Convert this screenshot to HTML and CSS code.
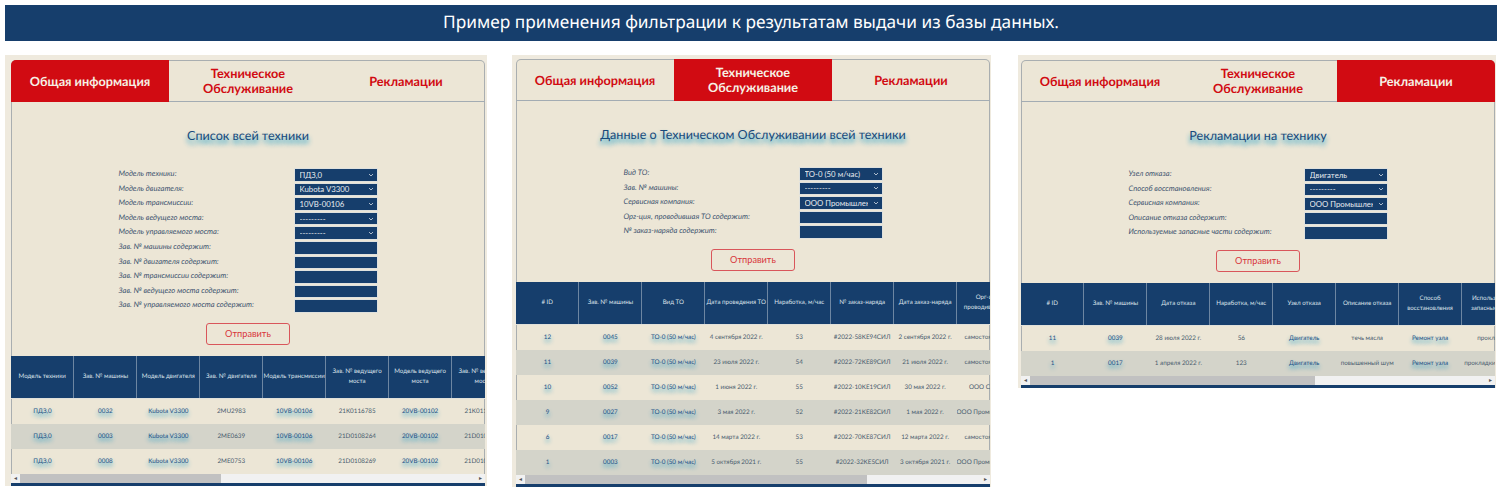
FILE: index.html
```html
<!DOCTYPE html>
<html lang="ru">
<head>
    <meta charset="UTF-8">
    <title>Пример применения фильтрации</title>
    <link rel="stylesheet" href="styles.css">
</head>
<body>
    <h1 class="banner">Пример применения фильтрации к результатам выдачи из базы данных.</h1>

    <div class="shots">
        <!-- Общая информация -->
        <section class="shot shot-first">
            <div class="card">
                <nav class="tabs">
                    <a class="tab active">Общая информация</a>
                    <a class="tab">Техническое Обслуживание</a>
                    <a class="tab">Рекламации</a>
                </nav>
                <h2 class="title">Список всей техники</h2>
                <form class="filter">
                    <label>Модель техники:</label>
                    <select><option>ПДЗ,0</option></select>
                    <label>Модель двигателя:</label>
                    <select><option>Kubota V3300</option></select>
                    <label>Модель трансмиссии:</label>
                    <select><option>10VB-00106</option></select>
                    <label>Модель ведущего моста:</label>
                    <select><option>---------</option></select>
                    <label>Модель управляемого моста:</label>
                    <select><option>---------</option></select>
                    <label>Зав. № машины содержит:</label>
                    <input type="text">
                    <label>Зав. № двигателя содержит:</label>
                    <input type="text">
                    <label>Зав. № трансмиссии содержит:</label>
                    <input type="text">
                    <label>Зав. № ведущего моста содержит:</label>
                    <input type="text">
                    <label>Зав. № управляемого моста содержит:</label>
                    <input type="text">
                    <button type="button" class="send">Отправить</button>
                </form>
                <div class="table-wrap">
                    <table>
                        <thead>
                            <tr>
                                <th>Модель техники</th>
                                <th>Зав. № машины</th>
                                <th>Модель двигателя</th>
                                <th>Зав. № двигателя</th>
                                <th>Модель трансмиссии</th>
                                <th>Зав. № ведущего моста</th>
                                <th>Модель ведущего моста</th>
                                <th>Зав. № ведущего моста</th>
                            </tr>
                        </thead>
                        <tbody>
                            <tr>
                                <td class="link">ПДЗ,0</td><td class="link">0032</td><td class="link">Kubota V3300</td><td>2MU2983</td>
                                <td class="link">10VB-00106</td><td>21K0116785</td><td class="link">20VB-00102</td><td>21K0116785</td>
                            </tr>
                            <tr>
                                <td class="link">ПДЗ,0</td><td class="link">0003</td><td class="link">Kubota V3300</td><td>2ME0639</td>
                                <td class="link">10VB-00106</td><td>21D0108264</td><td class="link">20VB-00102</td><td>21D0108264</td>
                            </tr>
                            <tr>
                                <td class="link">ПДЗ,0</td><td class="link">0008</td><td class="link">Kubota V3300</td><td>2ME0753</td>
                                <td class="link">10VB-00106</td><td>21D0108269</td><td class="link">20VB-00102</td><td>21D0108269</td>
                            </tr>
                        </tbody>
                    </table>
                </div>
                <div class="scrollbar"><span class="arrow">◂</span><div class="track"><div class="thumb thumb-first"></div></div><span class="arrow">▸</span></div>
                <div class="card-foot"></div>
            </div>
        </section>

        <!-- Техническое обслуживание -->
        <section class="shot shot-second">
            <div class="card">
                <nav class="tabs">
                    <a class="tab">Общая информация</a>
                    <a class="tab active">Техническое Обслуживание</a>
                    <a class="tab">Рекламации</a>
                </nav>
                <h2 class="title">Данные о Техническом Обслуживании всей техники</h2>
                <form class="filter">
                    <label>Вид ТО:</label>
                    <select><option>ТО-0 (50 м/час)</option></select>
                    <label>Зав. № машины:</label>
                    <select><option>---------</option></select>
                    <label>Сервисная компания:</label>
                    <select><option>ООО Промышленная техника</option></select>
                    <label>Орг-ция, проводившая ТО содержит:</label>
                    <input type="text">
                    <label>№ заказ-наряда содержит:</label>
                    <input type="text">
                    <button type="button" class="send">Отправить</button>
                </form>
                <div class="table-wrap">
                    <table>
                        <thead>
                            <tr>
                                <th># ID</th>
                                <th>Зав. № машины</th>
                                <th>Вид ТО</th>
                                <th>Дата проведения ТО</th>
                                <th>Наработка, м/час</th>
                                <th>№ заказ-наряда</th>
                                <th>Дата заказ-наряда</th>
                                <th>Орг-ция, проводившая ТО</th>
                            </tr>
                        </thead>
                        <tbody>
                            <tr>
                                <td class="link">12</td><td class="link">0045</td><td class="link">ТО-0 (50 м/час)</td><td>4 сентября 2022 г.</td>
                                <td>53</td><td>#2022-58KE94СИЛ</td><td>2 сентября 2022 г.</td><td>самостоятельно</td>
                            </tr>
                            <tr>
                                <td class="link">11</td><td class="link">0039</td><td class="link">ТО-0 (50 м/час)</td><td>23 июля 2022 г.</td>
                                <td>54</td><td>#2022-72KE89СИЛ</td><td>21 июля 2022 г.</td><td>самостоятельно</td>
                            </tr>
                            <tr>
                                <td class="link">10</td><td class="link">0052</td><td class="link">ТО-0 (50 м/час)</td><td>1 июня 2022 г.</td>
                                <td>55</td><td>#2022-10KE19СИЛ</td><td>30 мая 2022 г.</td><td>ООО Силант</td>
                            </tr>
                            <tr>
                                <td class="link">9</td><td class="link">0027</td><td class="link">ТО-0 (50 м/час)</td><td>3 мая 2022 г.</td>
                                <td>52</td><td>#2022-21KE82СИЛ</td><td>1 мая 2022 г.</td><td>ООО Промышленная</td>
                            </tr>
                            <tr>
                                <td class="link">6</td><td class="link">0017</td><td class="link">ТО-0 (50 м/час)</td><td>14 марта 2022 г.</td>
                                <td>53</td><td>#2022-70KE87СИЛ</td><td>12 марта 2022 г.</td><td>самостоятельно</td>
                            </tr>
                            <tr>
                                <td class="link">1</td><td class="link">0003</td><td class="link">ТО-0 (50 м/час)</td><td>5 октября 2021 г.</td>
                                <td>55</td><td>#2022-32KE5СИЛ</td><td>3 октября 2021 г.</td><td>ООО Промышленная</td>
                            </tr>
                        </tbody>
                    </table>
                </div>
                <div class="scrollbar"><span class="arrow">◂</span><div class="track"><div class="thumb thumb-second"></div></div><span class="arrow">▸</span></div>
                <div class="card-foot"></div>
            </div>
        </section>

        <!-- Рекламации -->
        <section class="shot shot-third">
            <div class="card">
                <nav class="tabs">
                    <a class="tab">Общая информация</a>
                    <a class="tab">Техническое Обслуживание</a>
                    <a class="tab active">Рекламации</a>
                </nav>
                <h2 class="title">Рекламации на технику</h2>
                <form class="filter">
                    <label>Узел отказа:</label>
                    <select><option>Двигатель</option></select>
                    <label>Способ восстановления:</label>
                    <select><option>---------</option></select>
                    <label>Сервисная компания:</label>
                    <select><option>ООО Промышленная техника</option></select>
                    <label>Описание отказа содержит:</label>
                    <input type="text">
                    <label>Используемые запасные части содержит:</label>
                    <input type="text">
                    <button type="button" class="send">Отправить</button>
                </form>
                <div class="table-wrap">
                    <table>
                        <thead>
                            <tr>
                                <th># ID</th>
                                <th>Зав. № машины</th>
                                <th>Дата отказа</th>
                                <th>Наработка, м/час</th>
                                <th>Узел отказа</th>
                                <th>Описание отказа</th>
                                <th>Способ восстановления</th>
                                <th>Используемые запасные части</th>
                            </tr>
                        </thead>
                        <tbody>
                            <tr>
                                <td class="link">11</td><td class="link">0039</td><td>28 июля 2022 г.</td><td>56</td>
                                <td class="link">Двигатель</td><td>течь масла</td><td class="link">Ремонт узла</td><td>прокладки</td>
                            </tr>
                            <tr>
                                <td class="link">1</td><td class="link">0017</td><td>1 апреля 2022 г.</td><td>123</td>
                                <td class="link">Двигатель</td><td>повышенный шум</td><td class="link">Ремонт узла</td><td>прокладки, сальник</td>
                            </tr>
                        </tbody>
                    </table>
                </div>
                <div class="scrollbar"><span class="arrow">◂</span><div class="track"><div class="thumb thumb-third"></div></div><span class="arrow">▸</span></div>
                <div class="card-foot"></div>
            </div>
        </section>
    </div>
</body>
</html>
```

FILE: styles.css
```css
html, body {
    margin: 0;
    padding: 0;
    background: #fff;
    overflow: hidden;
}

body {
    font-family: Lato, "Noto Sans", sans-serif;
    padding: 5px 6px 0 5px;
    height: 488px;
    text-rendering: geometricPrecision;
}

.banner {
    margin: 0;
    height: 36px;
    line-height: 36px;
    background: #163e6c;
    color: #fff;
    font-family: "Noto Sans", sans-serif;
    font-size: 17.3px;
    font-weight: 400;
    text-align: center;
}

.shots {
    display: flex;
    align-items: flex-start;
    margin-top: 14px;
}

.shot {
    background: #efeade;
    box-sizing: border-box;
}

.shot-first {
    width: 482px;
    padding: 5px 2px 0 6px;
}

.shot-second {
    width: 479px;
    margin-left: 25px;
    padding: 4px 1px 0 4px;
}

.shot-third {
    width: 478px;
    margin-left: 27px;
    padding: 5px 1px 0 3px;
}

.card {
    width: 474px;
    background: #ece6d6;
    border-radius: 5px 5px 0 0;
    box-shadow: inset 0 0 0 1px #a9aeb0;
    overflow: hidden;
}

/* tabs */
.tabs {
    display: grid;
    grid-template-columns: repeat(3, 1fr);
    height: 42px;
    border-bottom: 1px solid #a3acb3;
    box-sizing: border-box;
}

.tab {
    display: flex;
    align-items: center;
    justify-content: center;
    padding: 0 30px;
    color: #d10b12;
    font-size: 12.7px;
    font-weight: 700;
    line-height: 15px;
    text-align: center;
}

.tab:first-child,
.tab.active {
    padding: 0 10px;
}

.tab.active {
    background: #d10b12;
    color: #f6f1e4;
    height: 42px;
}

.title {
    margin: 0;
    height: 66px;
    box-sizing: border-box;
    padding-top: 25px;
    color: #174a7c;
    font-size: 12.6px;
    font-weight: 400;
    line-height: 18px;
    text-align: center;
    text-shadow: 0 4px 5px rgba(0, 150, 200, 0.9);
}

/* filter form */
.filter {
    display: grid;
    grid-template-columns: 175px 84px;
    grid-auto-rows: 13.6px;
    row-gap: 1px;
    justify-content: center;
    align-items: stretch;
}

.filter label {
    color: #3f5570;
    font-size: 7.6px;
    font-style: italic;
    line-height: 11px;
}

.filter select,
.filter input {
    box-sizing: border-box;
    width: 84px;
    height: 13.6px;
    margin: 0;
    padding: 0 14px 0 5px;
    border: 1px solid #dfe1de;
    border-radius: 0;
    outline: none;
    background-color: #163e6c;
    color: #e8ecf0;
    font-family: Lato, "Noto Sans", sans-serif;
    font-size: 7.8px;
}

.filter select {
    appearance: none;
    background-image: url("data:image/svg+xml,%3Csvg xmlns='http://www.w3.org/2000/svg' width='6' height='4' viewBox='0 0 6 4'%3E%3Cpath d='M1 1l2 2 2-2' fill='none' stroke='%23d5dde5' stroke-width='.8'/%3E%3C/svg%3E");
    background-repeat: no-repeat;
    background-position: right 3px center;
}

.send {
    grid-column: 1 / -1;
    justify-self: center;
    box-sizing: border-box;
    width: 84px;
    height: 22px;
    margin-top: 9px;
    grid-row-end: span 2;
    background: #ece6d6;
    border: 1px solid #d9565b;
    border-radius: 3px;
    color: #d8353b;
    font-family: Lato, "Noto Sans", sans-serif;
    font-size: 9.2px;
}

/* table */
.table-wrap {
    margin-top: 14px;
    overflow: hidden;
}

table {
    width: 504px;
    table-layout: fixed;
    border-collapse: collapse;
    text-align: center;
}

th {
    height: 42px;
    padding: 0;
    box-sizing: border-box;
    background: #163e6c;
    border-right: 1px solid #6d86a2;
    border-bottom: 1px solid #e0e0da;
    color: #dbe2ea;
    font-size: 6.2px;
    font-weight: 400;
    line-height: 10px;
}

td {
    height: 25px;
    padding: 0;
    color: #4a5c6e;
    font-size: 6.3px;
    white-space: nowrap;
    overflow: hidden;
}

tbody tr:nth-child(even) td {
    background: #d4d4ca;
}

td.link {
    color: #1c5288;
    font-weight: 400;
    text-shadow: 0 3px 4px rgba(0, 150, 200, 0.9);
}

/* scrollbar and the bottom strip */
.scrollbar {
    display: flex;
    align-items: center;
    height: 9px;
    background: #f1f1f1;
}

.arrow {
    flex: none;
    width: 9px;
    color: #555;
    font-size: 6px;
    line-height: 9px;
    text-align: center;
}

.track {
    flex: 1;
    height: 100%;
}

.thumb {
    height: 100%;
    background: #c1c1c1;
}

.thumb-first {
    width: 201px;
}

.thumb-second {
    width: 342px;
}

.thumb-third {
    width: 285px;
}

.card-foot {
    height: 3px;
    background: #163e6c;
}
```
